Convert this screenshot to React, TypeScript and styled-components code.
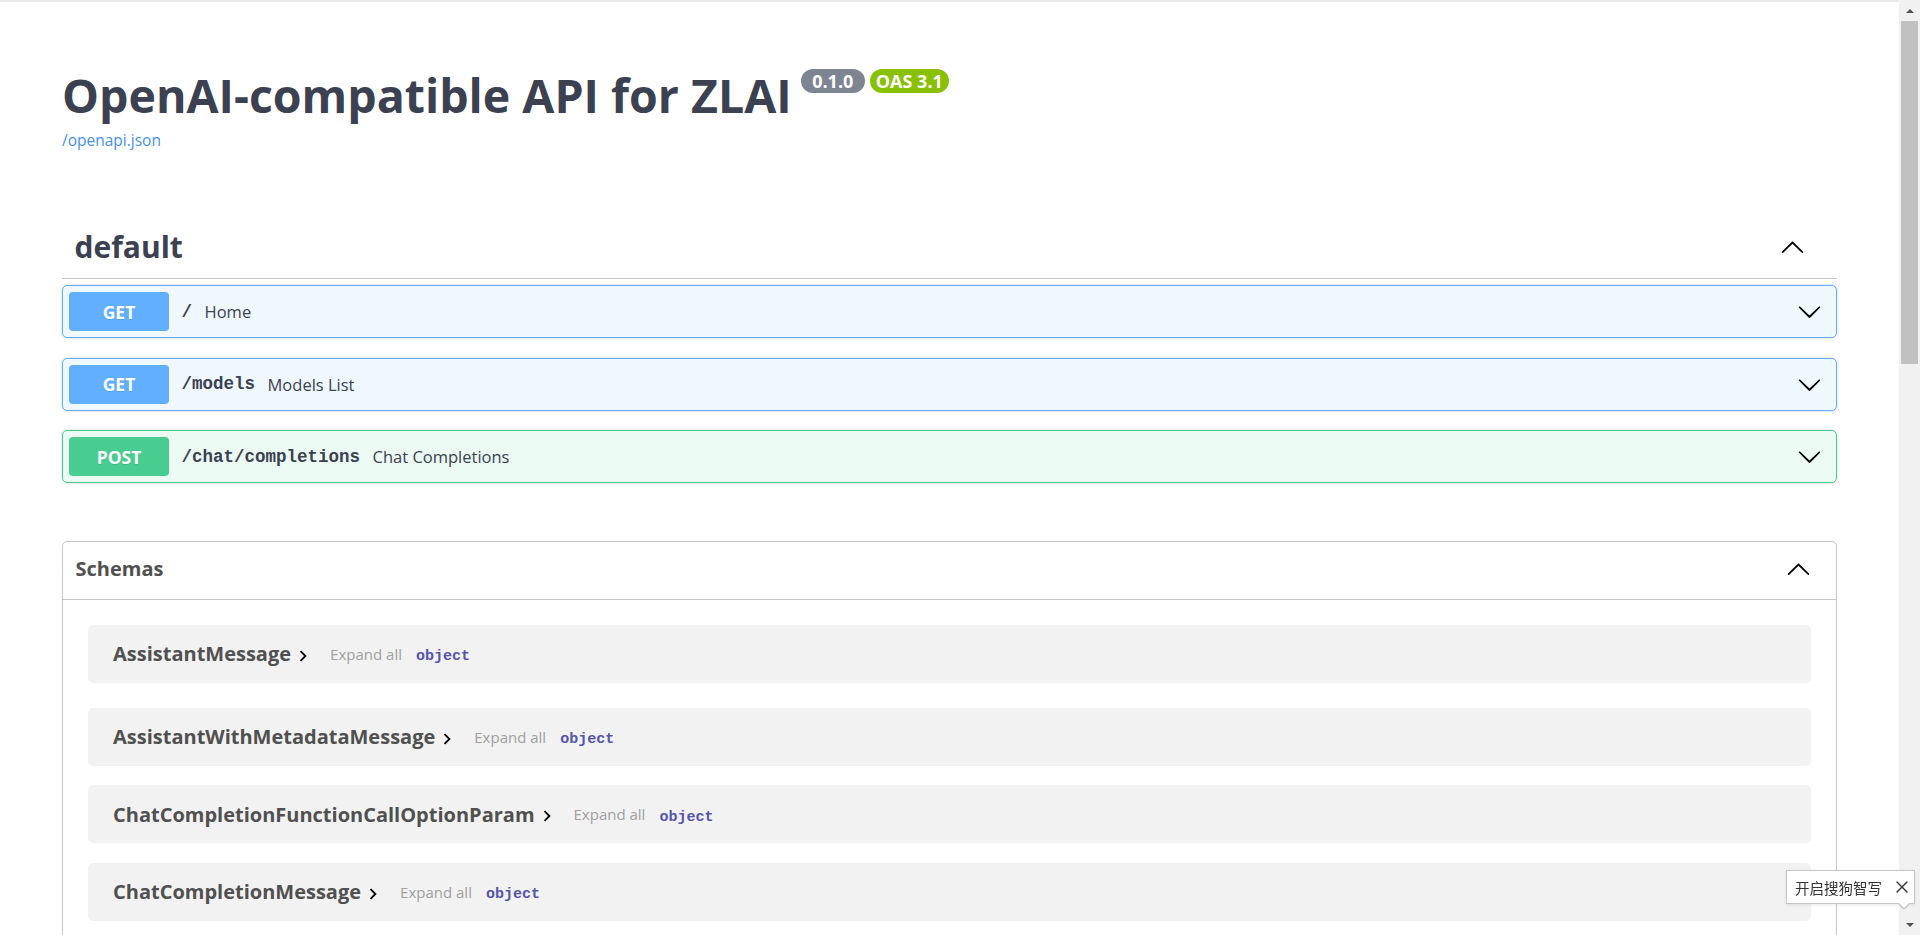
import styled, { createGlobalStyle } from 'styled-components';
import { X } from 'lucide-react';

const GlobalStyle = createGlobalStyle`
  html, body {
    margin: 0;
    padding: 0;
    overflow: hidden;
    background: #fff;
  }
  body {
    font-family: "Open Sans", "Noto Sans CJK SC", sans-serif;
    color: #3b4151;
  }
`;

const Shell = styled.div`
  display: flex;
  height: 100vh;
`;

const Scroller = styled.div`
  flex: 1;
  min-width: 0;
  overflow-y: auto;
  overflow-x: hidden;
  scrollbar-width: none;

  &::-webkit-scrollbar {
    display: none;
  }
`;

/* the browser's own scrollbar, drawn as a column beside the page */
const ScrollTrack = styled.div`
  display: flex;
  flex-direction: column;
  width: 21px;
  flex: none;
  background: #f1f1f1;
`;

const ScrollButton = styled.div<{ $up?: boolean }>`
  display: flex;
  align-items: center;
  justify-content: center;
  height: 21px;
  flex: none;

  &::after {
    content: '';
    border-left: 4px solid transparent;
    border-right: 4px solid transparent;
    ${({ $up }) =>
      $up ? 'border-bottom: 4px solid #505050;' : 'border-top: 4px solid #505050;'}
  }
`;

const ScrollThumb = styled.div`
  height: 343px;
  margin: 0 2px;
  background: #c1c1c1;
`;

const TopRule = styled.div`
  height: 2px;
  background: #e8e8e8;
`;

const Wrapper = styled.div`
  max-width: 1825px;
  margin: 0 auto;
  padding: 0 25px 95px;
  box-sizing: border-box;
`;

const Info = styled.div`
  padding-top: 66px;
`;

const TitleRow = styled.div`
  display: flex;
  align-items: flex-start;
`;

const Title = styled.h2`
  margin: 0;
  font-size: 46.5px;
  line-height: 54px;
  font-weight: 700;
  color: #3b4151;
`;

const Badges = styled.div`
  display: flex;
  gap: 5px;
  margin: 1px 0 0 9px;
`;

const Badge = styled.span<{ $bg: string }>`
  display: inline-block;
  box-sizing: border-box;
  min-width: 64px;
  height: 24px;
  padding: 0 6px;
  border-radius: 57px;
  background: ${({ $bg }) => $bg};
  color: #fff;
  font-size: 18px;
  line-height: 24px;
  font-weight: 700;
  text-align: center;
`;

const SpecLink = styled.a`
  display: block;
  margin-top: 8px;
  font-size: 15.5px;
  line-height: 20px;
  color: #4990e2;
  text-decoration: none;
`;

const TagSection = styled.div`
  margin-top: 69px;
`;

const TagHeader = styled.h3`
  display: flex;
  align-items: center;
  height: 60px;
  box-sizing: border-box;
  margin: 0 0 6px;
  padding: 0 25px 4px 12.5px;
  border-bottom: 1px solid rgba(59, 65, 81, 0.3);
  font-size: 30px;
  line-height: 36px;
  font-weight: 700;
  color: #3b4151;
`;

const Spacer = styled.div`
  flex: 1;
`;

const Arrow = styled.svg<{ $right: number }>`
  width: 25px;
  height: 25px;
  flex: none;
  margin-right: ${({ $right }) => $right}px;
  fill: #000;
`;

const Operation = styled.div<{ $color: string; $tint: string }>`
  display: flex;
  align-items: center;
  height: 53px;
  box-sizing: border-box;
  padding: 0 6px;
  margin-bottom: 19.5px;
  border: 1px solid ${({ $color }) => $color};
  background: ${({ $tint }) => $tint};
  border-radius: 5px;
  box-shadow: 0 0 3px rgba(0, 0, 0, 0.19);
`;

const Method = styled.span<{ $color: string }>`
  display: flex;
  align-items: center;
  justify-content: center;
  width: 100px;
  height: 39px;
  flex: none;
  border-radius: 4px;
  background: ${({ $color }) => $color};
  color: #fff;
  font-size: 17.5px;
  font-weight: 700;
  text-shadow: 0 1px 0 rgba(0, 0, 0, 0.1);
`;

const Path = styled.span`
  padding: 0 12.5px;
  font-family: "Liberation Mono", monospace;
  font-size: 17.5px;
  font-weight: 700;
  color: #3b4151;
`;

const Summary = styled.span`
  font-size: 16.5px;
  color: #3b4151;
`;

const Models = styled.section`
  margin-top: 57.5px;
  padding-bottom: 25px;
  border: 1px solid rgba(59, 65, 81, 0.3);
  border-radius: 5px;
`;

const ModelsHeader = styled.h4`
  display: flex;
  align-items: center;
  height: 58px;
  box-sizing: border-box;
  margin: 0;
  padding: 0 25px 4px 12.5px;
  border-bottom: 1px solid rgba(59, 65, 81, 0.3);
  font-size: 20px;
  font-weight: 700;
  color: #505050;
`;

const ModelRow = styled.div`
  display: flex;
  align-items: center;
  height: 58px;
  margin: 0 25px 19.5px;
  padding-left: 25px;
  border-radius: 5px;
  background: rgba(0, 0, 0, 0.05);

  &:first-of-type {
    margin: 25px;
  }
`;

const ModelTitle = styled.span`
  font-size: 20px;
  font-weight: 700;
  color: #505050;
`;

const Toggle = styled.svg`
  width: 22px;
  height: 22px;
  margin: 4px 0 0 1px;
  fill: #000;
`;

const ExpandAll = styled.span`
  margin-left: 16px;
  font-size: 15px;
  color: #a0a0a0;
`;

const PropType = styled.span`
  margin: 6px 0 0 14px;
  font-family: "Liberation Mono", monospace;
  font-size: 15px;
  font-weight: 700;
  color: #55a;
`;

const ImeTip = styled.div`
  position: fixed;
  right: 5px;
  bottom: 31px;
  display: flex;
  align-items: center;
  width: 129px;
  height: 34px;
  box-sizing: border-box;
  padding: 0 2px 0 8px;
  background: #fff;
  border: 1px solid #c6c6c6;
  box-shadow: 0 1px 3px rgba(0, 0, 0, 0.08);
  font-family: "Noto Sans CJK SC", sans-serif;
  font-size: 14.5px;
  color: #333;

  &::before,
  &::after {
    content: '';
    position: absolute;
    right: 4px;
    border-style: solid;
    border-color: transparent;
  }
  &::before {
    bottom: -7px;
    border-width: 6px 6px 0;
    border-top-color: #c6c6c6;
  }
  &::after {
    bottom: -5px;
    right: 5px;
    border-width: 5px 5px 0;
    border-top-color: #fff;
  }
`;

const ImeClose = styled.span`
  display: flex;
  margin-left: auto;
`;

const DOWN =
  'M17.418 6.109c.272-.268.709-.268.979 0s.275.701 0 .969l-7.908 7.83c-.27.268-.707.268-.979 0l-7.908-7.83c-.27-.268-.27-.701 0-.969.271-.268.709-.268.979 0L10 13.25l7.418-7.141z';
const UP =
  'M17.418 14.908c.272.268.709.268.979 0s.275-.701 0-.969l-7.908-7.83c-.27-.268-.707-.268-.979 0l-7.908 7.83c-.27.268-.27.701 0 .969.271.268.709.268.979 0L10 7.767l7.418 7.141z';

const operations = [
  { method: 'GET', path: '/', summary: 'Home' },
  { method: 'GET', path: '/models', summary: 'Models List' },
  { method: 'POST', path: '/chat/completions', summary: 'Chat Completions' },
];

const methodColors: Record<string, { color: string; tint: string }> = {
  GET: { color: '#61affe', tint: 'rgba(97, 175, 254, 0.1)' },
  POST: { color: '#49cc90', tint: 'rgba(73, 204, 144, 0.1)' },
};

const schemas = [
  'AssistantMessage',
  'AssistantWithMetadataMessage',
  'ChatCompletionFunctionCallOptionParam',
  'ChatCompletionMessage',
  'ChatCompletionMessageToolCall',
  'ChatCompletionNamedToolChoiceParam',
  'ChatCompletionRequest',
  'ChatCompletionResponse',
  'ChatCompletionResponseChoice',
  'ChatCompletionToolParam',
  'CompletionUsage',
  'Function',
  'FunctionCall',
  'FunctionDefinition',
  'HTTPValidationError',
  'ModelCard',
  'ModelList',
  'ModelPermission',
  'SystemMessage',
  'ToolMessage',
  'UserMessage',
  'ValidationError',
];

export default function App() {
  return (
    <>
      <GlobalStyle />
      <Shell>
        <Scroller>
          <TopRule />
          <Wrapper>
            <Info>
              <TitleRow>
                <Title>OpenAI-compatible API for ZLAI</Title>
                <Badges>
                  <Badge $bg="#7d8492">0.1.0</Badge>
                  <Badge $bg="#89bf04">OAS 3.1</Badge>
                </Badges>
              </TitleRow>
              <SpecLink href="#">/openapi.json</SpecLink>
            </Info>

            <TagSection>
              <TagHeader>
                <span>default</span>
                <Spacer />
                <Arrow $right={7} viewBox="0 0 20 20">
                  <path d={UP} />
                </Arrow>
              </TagHeader>
              {operations.map((op) => (
                <Operation
                  key={op.path}
                  $color={methodColors[op.method].color}
                  $tint={methodColors[op.method].tint}
                >
                  <Method $color={methodColors[op.method].color}>{op.method}</Method>
                  <Path>{op.path}</Path>
                  <Summary>{op.summary}</Summary>
                  <Spacer />
                  <Arrow $right={8} viewBox="0 0 20 20">
                    <path d={DOWN} />
                  </Arrow>
                </Operation>
              ))}
            </TagSection>

            <Models>
              <ModelsHeader>
                <span>Schemas</span>
                <Spacer />
                <Arrow $right={0} viewBox="0 0 20 20">
                  <path d={UP} />
                </Arrow>
              </ModelsHeader>
              {schemas.map((name) => (
                <ModelRow key={name}>
                  <ModelTitle>{name}</ModelTitle>
                  <Toggle viewBox="0 0 24 24">
                    <path d="M10 6L8.59 7.41 13.17 12l-4.58 4.59L10 18l6-6z" />
                  </Toggle>
                  <ExpandAll>Expand all</ExpandAll>
                  <PropType>object</PropType>
                </ModelRow>
              ))}
            </Models>
          </Wrapper>
        </Scroller>
        <ScrollTrack>
          <ScrollButton $up />
          <ScrollThumb />
          <Spacer />
          <ScrollButton />
        </ScrollTrack>
      </Shell>
      <ImeTip>
        <span>开启搜狗智写</span>
        <ImeClose>
          <X size={20} strokeWidth={1.6} color="#333" />
        </ImeClose>
      </ImeTip>
    </>
  );
}
